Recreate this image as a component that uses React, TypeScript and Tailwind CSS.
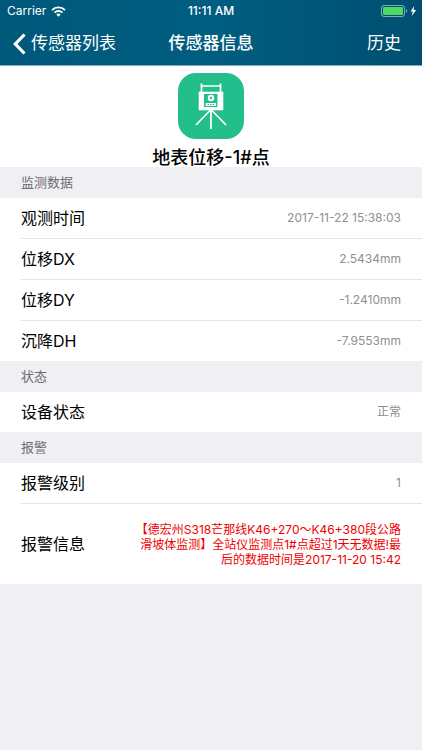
import type { ReactNode } from "react";

type Item = { label: string; value: string };

const measurements: Item[] = [
  { label: "观测时间", value: "2017-11-22 15:38:03" },
  { label: "位移DX", value: "2.5434mm" },
  { label: "位移DY", value: "-1.2410mm" },
  { label: "沉降DH", value: "-7.9553mm" },
];

function StatusBar() {
  return (
    <div className="relative flex h-[22px] items-center justify-between pl-[7px] pr-1 text-[12px]">
      <div className="flex items-center gap-[5px]">
        <span>Carrier</span>
        <svg width="15" height="11" viewBox="0 0 15 11" fill="none" stroke="white" strokeWidth="1.9">
          <path d="M1 4.1a9.2 9.2 0 0 1 13 0" />
          <path d="M3.5 6.6a5.7 5.7 0 0 1 8 0" />
          <path d="M7.5 10.8 5.3 8.5a3.1 3.1 0 0 1 4.4 0z" fill="white" stroke="none" />
        </svg>
      </div>
      <span className="absolute inset-x-0 text-center font-medium">11:11 AM</span>
      <svg width="38" height="12" viewBox="0 0 38 12">
        <rect x="1.5" y="0.5" width="23" height="11" rx="2.5" fill="none" stroke="white" strokeOpacity="0.5" />
        <rect x="3" y="2" width="20" height="8" rx="1" fill="#4cd964" />
        <path d="M26 4v4c1.6-.5 1.6-3.5 0-4z" fill="white" fillOpacity="0.5" />
        <path d="M34.2 1 30.5 6.6h2.3L31.7 11l4.5-6h-2.6z" fill="white" />
      </svg>
    </div>
  );
}

function NavBar() {
  return (
    <nav className="relative flex h-[43px] items-center justify-between pl-[13px] pr-[21px] text-[17px]">
      <a href="#" className="z-1 flex items-center gap-[5px]">
        <svg width="13" height="22" viewBox="0 0 13 22" fill="none" stroke="white" strokeWidth="3.2">
          <path d="M11.5 1.5 2.3 11l9.2 9.5" />
        </svg>
        传感器列表
      </a>
      <h1 className="absolute inset-x-0 text-center font-medium">传感器信息</h1>
      <button type="button" className="z-1">
        历史
      </button>
    </nav>
  );
}

function SensorIcon() {
  return (
    <svg width="66" height="66" viewBox="0 0 66 66" fill="none" stroke="white">
      <rect width="66" height="66" rx="18" fill="#22bf8c" stroke="none" />
      {/* carrying handle */}
      <path d="M23.5 10.5v9M42.5 10.5v9" strokeWidth="1.8" />
      <path d="M23.5 13h19" strokeWidth="1.5" />
      {/* instrument body */}
      <path d="M20.7 18.7h24.6v18.6H20.7z" fill="white" stroke="none" />
      <path d="M26 21h13.5v13H26z" fill="#22bf8c" stroke="none" />
      <circle cx="33" cy="25" r="2.2" strokeWidth="2" />
      <path d="M27.7 30h10.5v3H27.7z" fill="white" stroke="none" />
      <path d="M29.5 31.5h7" stroke="#22bf8c" strokeDasharray="1.5 1" />
      {/* tripod */}
      <path d="M33 37v19M32.5 37 18 52M33.5 37 48 52" strokeWidth="1.7" />
    </svg>
  );
}

function Section({ title, children }: { title: string; children: ReactNode }) {
  return (
    <section>
      <h2 className="flex h-[31px] items-center bg-[#efeff4] px-[21px] text-[13px] text-[#6d6d72]">{title}</h2>
      <dl className="divide-y divide-[#e6e6ea] bg-white pl-[21px]">{children}</dl>
    </section>
  );
}

function Row({ label, value }: Item) {
  return (
    <div className="flex items-center justify-between">
      <dt className="text-base leading-10">{label}</dt>
      <dd className="pr-[21px] text-[12px] text-[#8e8e93]">{value}</dd>
    </div>
  );
}

export default function App() {
  return (
    <div className="min-h-screen bg-[#efeff4] font-['Inter','Noto_Sans_CJK_SC',sans-serif] text-black">
      <header className="border-b border-[#7fabbd] bg-linear-to-r from-[#00587b] via-[#005e80] to-[#004f70] text-white">
        <StatusBar />
        <NavBar />
      </header>
      <main>
        <div className="flex flex-col items-center bg-white pt-[7px]">
          <SensorIcon />
          <p className="pt-[10px] text-[18px] leading-[18px] font-medium">地表位移-1#点</p>
        </div>
        <Section title="监测数据">
          {measurements.map((item) => (
            <Row key={item.label} {...item} />
          ))}
        </Section>
        <Section title="状态">
          <Row label="设备状态" value="正常" />
        </Section>
        <Section title="报警">
          <Row label="报警级别" value="1" />
          <div className="flex items-center justify-between">
            <dt className="text-base leading-[80px]">报警信息</dt>
            <dd className="pr-[21px] text-right text-[12px] leading-[15px] text-[#f00000]">
              【德宏州S318芒那线K46+270～K46+380段公路
              <br />
              滑坡体监测】全站仪监测点1#点超过1天无数据!最
              <br />
              后的数据时间是2017-11-20 15:42
            </dd>
          </div>
        </Section>
      </main>
    </div>
  );
}
